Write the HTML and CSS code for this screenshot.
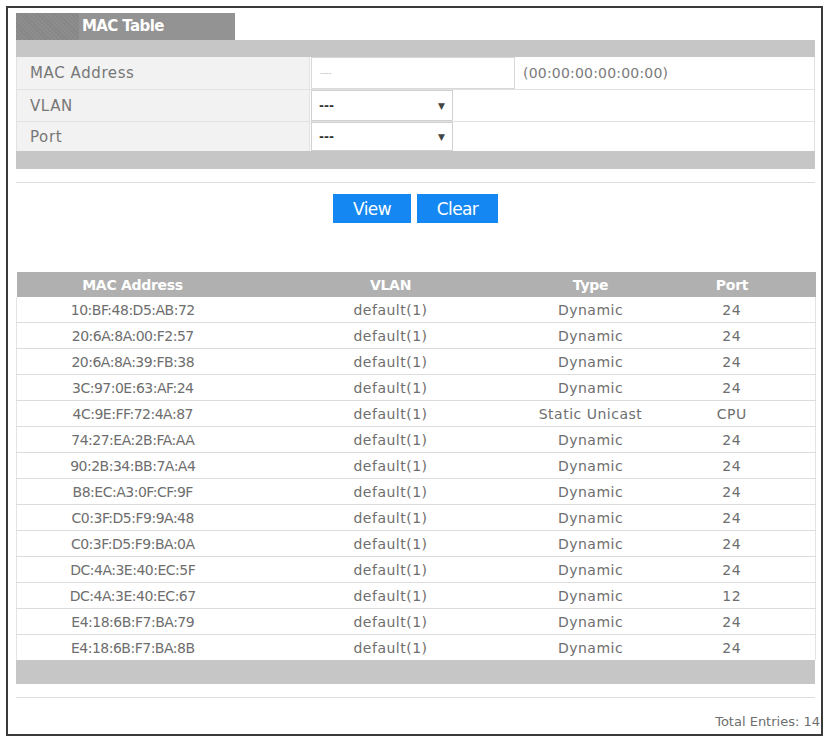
FILE: index.html
```html
<!DOCTYPE html>
<html>
<head>
<meta charset="utf-8">
<title>MAC Table</title>
<link rel="stylesheet" href="styles.css">
</head>
<body>
<div class="frame">
  <div class="panel">
    <div class="tabs">
      <div class="tab-stub"></div>
      <div class="tab">MAC Table</div>
    </div>
    <div class="bar"></div>
    <div class="form">
      <div class="frow frow-mac">
        <div class="flabel">MAC Address</div>
        <div class="fval">
          <div class="input">----</div>
          <div class="hint">(00:00:00:00:00:00)</div>
        </div>
      </div>
      <div class="frow frow-vlan">
        <div class="flabel">VLAN</div>
        <div class="fval">
          <div class="select"><span>---</span><span class="caret">&#9660;</span></div>
        </div>
      </div>
      <div class="frow frow-port">
        <div class="flabel">Port</div>
        <div class="fval">
          <div class="select"><span>---</span><span class="caret">&#9660;</span></div>
        </div>
      </div>
    </div>
    <div class="bar bar-foot"></div>
    <div class="rule"></div>
    <div class="actions">
      <button class="btn btn-view">View</button>
      <button class="btn btn-clear">Clear</button>
    </div>
    <table class="mac">
      <colgroup>
        <col class="c-mac"><col class="c-vlan"><col class="c-type"><col class="c-port">
      </colgroup>
      <thead>
        <tr><th>MAC Address</th><th>VLAN</th><th>Type</th><th>Port</th></tr>
      </thead>
      <tbody>
        <tr><td>10:BF:48:D5:AB:72</td><td>default(1)</td><td>Dynamic</td><td>24</td></tr>
        <tr><td>20:6A:8A:00:F2:57</td><td>default(1)</td><td>Dynamic</td><td>24</td></tr>
        <tr><td>20:6A:8A:39:FB:38</td><td>default(1)</td><td>Dynamic</td><td>24</td></tr>
        <tr><td>3C:97:0E:63:AF:24</td><td>default(1)</td><td>Dynamic</td><td>24</td></tr>
        <tr><td>4C:9E:FF:72:4A:87</td><td>default(1)</td><td>Static Unicast</td><td>CPU</td></tr>
        <tr><td>74:27:EA:2B:FA:AA</td><td>default(1)</td><td>Dynamic</td><td>24</td></tr>
        <tr><td>90:2B:34:BB:7A:A4</td><td>default(1)</td><td>Dynamic</td><td>24</td></tr>
        <tr><td>B8:EC:A3:0F:CF:9F</td><td>default(1)</td><td>Dynamic</td><td>24</td></tr>
        <tr><td>C0:3F:D5:F9:9A:48</td><td>default(1)</td><td>Dynamic</td><td>24</td></tr>
        <tr><td>C0:3F:D5:F9:BA:0A</td><td>default(1)</td><td>Dynamic</td><td>24</td></tr>
        <tr><td>DC:4A:3E:40:EC:5F</td><td>default(1)</td><td>Dynamic</td><td>24</td></tr>
        <tr><td>DC:4A:3E:40:EC:67</td><td>default(1)</td><td>Dynamic</td><td>12</td></tr>
        <tr><td>E4:18:6B:F7:BA:79</td><td>default(1)</td><td>Dynamic</td><td>24</td></tr>
        <tr><td>E4:18:6B:F7:BA:8B</td><td>default(1)</td><td>Dynamic</td><td>24</td></tr>
      </tbody>
    </table>
    <div class="bar bar-table"></div>
    <div class="rule rule-bottom"></div>
  </div>
  <div class="total">Total Entries: 14</div>
</div>
</body>
</html>
```

FILE: styles.css
```css
html, body {
  margin: 0;
  padding: 0;
  background: #fff;
}

body {
  font-family: "DejaVu Sans", "Liberation Sans", sans-serif;
  color: #6e6e6e;
}

.frame {
  box-sizing: border-box;
  width: 817px;
  height: 730px;
  margin: 6px 0 0 6px;
  border: 2px solid #3a3a3a;
  padding: 5px 0 0 8px;
}

.panel {
  width: 799px;
}

/* tab strip */
.tabs {
  display: flex;
  height: 27px;
}

.tab-stub {
  width: 63px;
  background: repeating-linear-gradient(45deg, #868686 0 1px, #8d8d8d 1px 3px);
}

.tab {
  width: 156px;
  background: #939393;
  color: #fff;
  font-weight: bold;
  font-size: 15px;
  line-height: 27px;
  padding-left: 3px;
  box-sizing: border-box;
  letter-spacing: -0.6px;
}

.bar {
  height: 17px;
  background: #c6c6c6;
}

.bar-foot {
  height: 18px;
}

/* filter form */
.form {
  border-left: 1px solid #e2e2e2;
  border-right: 1px solid #e2e2e2;
}

.frow {
  display: flex;
  border-bottom: 1px solid #e2e2e2;
}

.frow:last-child {
  border-bottom: none;
}

.frow-mac { height: 32px; }
.frow-vlan { height: 31px; }
.frow-port { height: 29px; }

.flabel {
  width: 293px;
  box-sizing: border-box;
  background: #f2f2f2;
  border-right: 1px solid #e2e2e2;
  padding-left: 13px;
  display: flex;
  align-items: center;
  color: #777;
  font-size: 15px;
  letter-spacing: 0.6px;
}

.fval {
  flex: 1;
  display: flex;
  align-items: stretch;
  padding-left: 1px;
}

.input {
  width: 204px;
  box-sizing: border-box;
  border: 1px solid #d8d8d8;
  font-size: 8px;
  color: #bbb;
  padding-left: 8px;
  display: flex;
  align-items: center;
}

.hint {
  padding-left: 8px;
  display: flex;
  align-items: center;
  color: #7a7a7a;
  font-size: 14px;
  letter-spacing: 0.2px;
}

.select {
  width: 142px;
  box-sizing: border-box;
  border: 1px solid #d0d0d0;
  display: flex;
  align-items: center;
  justify-content: space-between;
  padding: 0 7px 0 7px;
  color: #333;
  font-size: 12px;
  font-weight: bold;
}

.caret {
  font-size: 9px;
  color: #444;
}

.rule {
  height: 1px;
  background: #dedede;
  margin-top: 13px;
}

/* buttons */
.actions {
  display: flex;
  justify-content: center;
  gap: 6px;
  margin-top: 11px;
  height: 29px;
}

.btn {
  border: none;
  background: #1487f2;
  color: #fff;
  font-family: inherit;
  font-size: 17px;
  height: 29px;
  padding: 0;
  letter-spacing: -0.6px;
}

.btn-view { width: 78px; }
.btn-clear { width: 81px; }

/* result table */
table.mac {
  width: 799px;
  margin-top: 49px;
  border-collapse: collapse;
  table-layout: fixed;
  font-size: 14px;
}

.c-mac { width: 232px; }
.c-vlan { width: 284px; }
.c-type { width: 116px; }
.c-port { width: 167px; }

table.mac th {
  background: #b0b0b0;
  color: #fff;
  font-weight: bold;
  font-size: 14px;
  letter-spacing: -0.3px;
  height: 25px;
  padding: 0;
  text-align: center;
}

table.mac td {
  height: 25px;
  padding: 0;
  text-align: center;
  color: #6e6e6e;
  border-bottom: 1px solid #dcdcdc;
  letter-spacing: 0.5px;
  white-space: nowrap;
}

table.mac td:first-child {
  letter-spacing: -0.5px;
}

table.mac tbody tr:last-child td {
  border-bottom: none;
}

table.mac tbody tr td:first-child {
  border-left: 1px solid #e4e4e4;
}

table.mac tbody tr td:last-child {
  border-right: 1px solid #e4e4e4;
}

.bar-table {
  height: 24px;
}

.rule-bottom {
  margin-top: 13px;
}

.total {
  text-align: right;
  padding-right: 1px;
  margin-top: 16px;
  font-size: 13px;
  color: #6e6e6e;
}
```
